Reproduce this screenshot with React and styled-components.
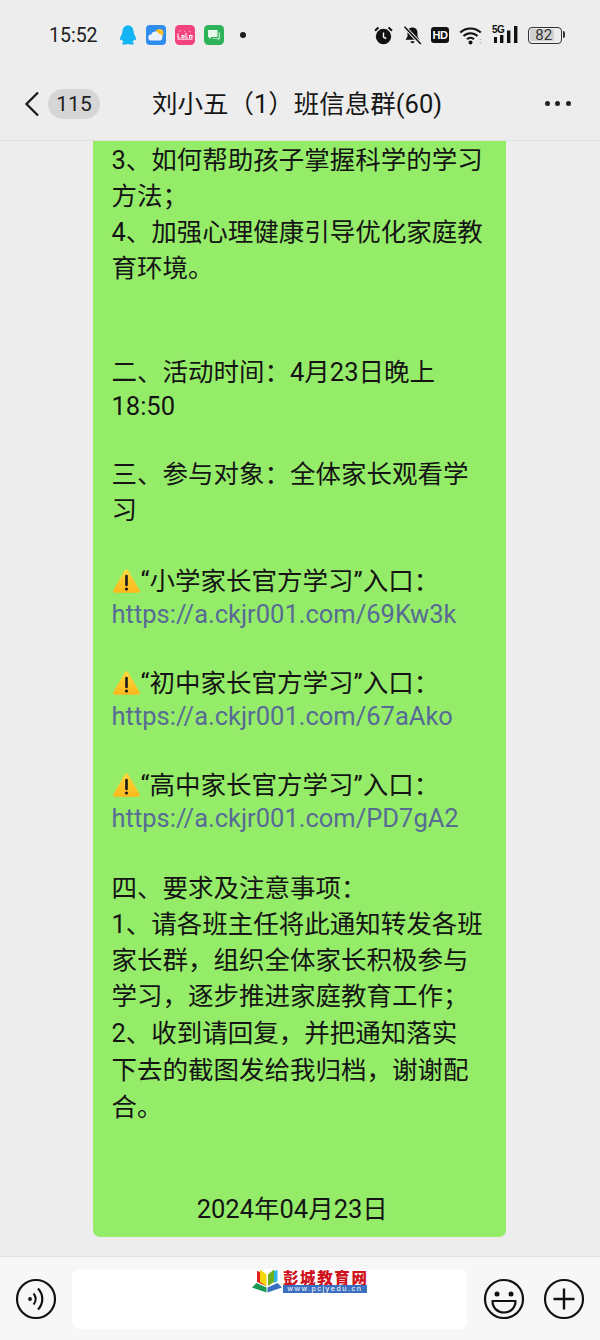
import React from "react";
import styled, { createGlobalStyle } from "styled-components";

const Global = createGlobalStyle`
  html, body { margin: 0; padding: 0; background: #ededed; }
  body { width: 600px; height: 1340px; overflow: hidden; font-family: Roboto, "Noto Sans CJK SC", sans-serif; color: #141414; }
`;
const Page = styled.div`
  width: 600px; height: 1340px; display: flex; flex-direction: column; overflow: hidden; background: #ededed;
`;
const StatusBar = styled.div`
  height: 70px; flex: none; display: flex; align-items: center; padding: 0 36px 0 49px; box-sizing: border-box;
`;
const Time = styled.span`
  font-size: 19.5px; letter-spacing: 0; color: #1c1c1c; width: 70px; flex: none;
`;
const IconGroup = styled.div`
  display: flex; align-items: center; gap: ${p => p.$gap}px; flex: none;
`;
const Spacer = styled.div`flex: 1;`;
const HdBadge = styled.span`
  width: 18px; height: 16px; border-radius: 3px; background: #111; color: #fff; font: 700 11px/16px "Liberation Sans", sans-serif; text-align: center; letter-spacing: -0.3px;
`;
const Signal = styled.div`
  position: relative; width: 26px; height: 18px; flex: none;
`;
const FiveG = styled.span`
  position: absolute; left: 0; top: -1px; font: 700 10px/9px "Liberation Sans", sans-serif; color: #111; letter-spacing: -0.6px;
`;
const Battery = styled.div`
  width: 29.4px; height: 12px; border: 1.3px solid #333; border-radius: 4px; position: relative; display: flex; align-items: stretch; padding: 1.5px; margin-right: 2px; box-sizing: content-box; flex: none;
  &::after { content: ""; position: absolute; right: -4px; top: 3px; width: 2.5px; height: 7px; background: #333; border-radius: 0 2px 2px 0; }
`;
const BatteryFill = styled.div`
  width: 82%; background: #d0d0d0; border-radius: 1.5px; font-size: 15px; line-height: 12px; color: #333; text-align: center; white-space: nowrap; padding-left: 3px; box-sizing: border-box;
`;
const Header = styled.div`
  height: 71px; flex: none; box-sizing: border-box; display: flex; align-items: center; padding: 0 29.5px 3px 24px; border-bottom: 1px solid #e2e2e2; color: #161616;
`;
const Pill = styled.div`
  width: 52px; height: 30px; border-radius: 15px; background: #d6d6d6; font-size: 21px; line-height: 30px; text-align: center; margin-left: 8px; flex: none; color: #222;
`;
const Title = styled.div`
  font-size: 25.5px; line-height: 36px; margin-left: 52px; white-space: nowrap; flex: 1;
`;
const Dots = styled.div`display: flex; gap: 5.5px;`;
const Dot = styled.span`width: 5px; height: 5px; border-radius: 50%; background: #222;`;
const Chat = styled.div`
  flex: 1; min-height: 0; padding-left: 93px; overflow: hidden;
`;
const Bubble = styled.div`
  width: 413px; height: 1096px; box-sizing: border-box; padding: 1px 0 0 18.5px; background: #95ec69; border-radius: 0 0 7px 7px; font-size: 25.5px; color: #141414;
`;
const Line = styled.div`
  height: ${p => p.$h || 36}px; line-height: ${p => p.$h || 36}px; white-space: nowrap; display: flex; align-items: center;
  ${p => p.$center ? "justify-content: center; padding-right: 33px;" : ""}
`;
const LatinLine = styled(Line)`
  box-sizing: border-box; height: 32px; line-height: 30px; padding-bottom: 1px;
`;
const Link = styled(LatinLine)`
  color: #576b95;
`;
const WarnLine = styled(Line)`
  height: 34px; line-height: 34px;
`;
const WarnIcon = styled.svg`
  width: 27px; height: 24px; flex: none; margin-right: 0.5px; margin-left: 1.5px;
`;
const Footer = styled.div`
  height: 84px; flex: none; box-sizing: border-box; background: #f7f7f7; border-top: 1px solid #dfdfdf; display: flex; align-items: center; padding: 0 15px; margin-top: 19px;
`;
const Input = styled.div`
  position: relative; width: 395px; height: 60px; background: #fff; border-radius: 8px; margin-left: 15px; margin-right: 16px; flex: none;
`;
const RoundIcon = styled.svg`
  width: 42px; height: 42px; flex: none; margin-left: ${p => p.$ml || 0}px;
`;
const Watermark = styled.div`
  position: absolute; left: 180px; top: -1px; display: flex; align-items: flex-start; gap: 1px;
`;
const WmText = styled.div`display: flex; flex-direction: column; width: 84px; padding-top: 2px;`;
const WmName = styled.div`
  font: 900 15.5px/15px "Noto Sans CJK SC", sans-serif; color: #d0121d; white-space: nowrap; letter-spacing: 1.6px; height: 15px;
`;
const WmUrl = styled.div`
  background: #3a6fc0; color: #fff; font: 400 7.5px/8px "Liberation Sans", sans-serif; letter-spacing: 1.5px; white-space: nowrap; height: 8px; text-align: center; overflow: hidden;
`;
const SmallDot = styled.span`width: 6px; height: 6px; border-radius: 50%; background: #1c1c1c; margin-left: 7px;`;

const Warn = () => (
  <WarnIcon viewBox="0 0 27 24">
    <defs>
      <linearGradient id="warnGrad" x1="0" y1="0" x2="0" y2="1">
        <stop offset="0" stopColor="#ffd83a" />
        <stop offset="1" stopColor="#fdb71c" />
      </linearGradient>
    </defs>
    <path d="M13.5 0.500c.9 0 1.600.5 2.100 1.400L26.500 21c.8 1.400-.1 2.800-1.700 2.800H2.200c-1.600 0-2.500-1.400-1.700-2.800L11.400 1.900c.5-.9 1.200-1.400 2.100-1.400z" fill="url(#warnGrad)" />
    <path d="M13.500 7v9" stroke="#1a1a1a" strokeWidth="2.600" strokeLinecap="round" />
    <circle cx="13.500" cy="20" r="1.600" fill="#1a1a1a" />
  </WarnIcon>
);

const Penguin = () => (
  <svg width="18" height="20" viewBox="0 0 18 20">
    <path d="M9 0.500c-3.600 0-5.500 2.700-5.500 6 0 1-.2 1.700-.8 2.800C1.700 11.200.6 13.300 1 14.800c.3.800 1.100.4 1.800-.5.300 1.200 1 2.200 1.900 3-1.100.4-1.800.9-1.800 1.400 0 .6 1.600.8 3.300.8 1.200 0 2.100-.2 2.800-.5.700.3 1.600.5 2.800.5 1.700 0 3.300-.2 3.300-.8 0-.5-.7-1-1.800-1.400.9-.8 1.600-1.800 1.900-3 .7.900 1.500 1.300 1.800.5.400-1.500-.7-3.600-1.700-5.500-.6-1.100-.8-1.800-.8-2.800 0-3.300-1.900-6-5.500-6z" fill="#12b4f4" />
  </svg>
);
const Weather = () => (
  <svg width="20" height="20" viewBox="0 0 20 20">
    <rect width="20" height="20" rx="4" fill="#2f8df0" />
    <circle cx="13.500" cy="8" r="4" fill="#fbc02d" />
    <path d="M5.500 15.500a3 3 0 0 1-.3-6 4.200 4.200 0 0 1 7.800-.6 3.400 3.400 0 0 1 1.200 6.600z" fill="#eaf3fd" />
  </svg>
);
const PinkApp = () => (
  <svg width="20" height="20" viewBox="0 0 20 20">
    <rect width="20" height="20" rx="4.500" fill="#f2427f" />
    <path d="M3 8.500v4.500h2.500M7 10.500h2v2.500H7zM11 8v5h2M14.500 10.500h2.500v2.500h-2.500z" stroke="#fff" strokeWidth="1.100" fill="none" />
    <path d="M4 6.500l1.500-1M9 6l1 1M14 6l1.500 1M2.500 14.500h15" stroke="#ffd5e3" strokeWidth=".8" fill="none" />
  </svg>
);
const GreenApp = () => (
  <svg width="20" height="20" viewBox="0 0 20 20">
    <rect width="20" height="20" rx="4.500" fill="#2fb35a" />
    <path d="M4 5h9.500v7H7.500L5 14v-2H4z" fill="#e6f7ea" />
    <path d="M14.700 7.500H16v6.500h-1v1.500L13 14H8.500v-.8h6.200z" fill="#bfe8cb" />
  </svg>
);
const Alarm = () => (
  <svg width="19" height="19" viewBox="0 0 19 19">
    <circle cx="9.500" cy="10.500" r="7.700" fill="#111" />
    <path d="M1 4.800 4.500 1.500M18 4.800 14.500 1.500" stroke="#111" strokeWidth="2" />
    <path d="M9.500 6.500v4.500l2.800 1.700" stroke="#fff" strokeWidth="1.400" fill="none" />
  </svg>
);
const BellMute = () => (
  <svg width="19" height="19" viewBox="0 0 19 19">
    <path d="M9.500 1.500c-3 0-5 2.200-5 5.200v3.800L2.500 13.800h14l-2-3.300V6.700c0-3-2-5.200-5-5.200z" fill="#111" />
    <path d="M7.500 15.300a2 2 0 0 0 4 0z" fill="#111" />
    <path d="M1.500 0.800 17.800 18" stroke="#ededed" strokeWidth="3.500" />
    <path d="M1.500 0.800 17.800 18" stroke="#111" strokeWidth="1.600" />
  </svg>
);
const Wifi = () => (
  <svg width="24" height="19" viewBox="0 0 24 19">
    <path d="M1.200 6.500a15 15 0 0 1 20.600 0" stroke="#111" strokeWidth="2" fill="none" />
    <path d="M4.500 10a10 10 0 0 1 14 0" stroke="#111" strokeWidth="2" fill="none" />
    <path d="M8 13.300a5 5 0 0 1 7 0" stroke="#111" strokeWidth="2" fill="none" />
    <circle cx="11.500" cy="16.500" r="2" fill="#111" />
    <path d="M20 14l1.500-1.500 1.500 1.500zM20 16l1.500 1.500 1.500-1.500z" fill="#bbb" />
  </svg>
);
const SignalBars = () => (
  <svg width="26" height="18" viewBox="0 0 26 18" style={{ position: "absolute", left: 0, top: 0 }}>
    <rect x="2" y="11" width="3" height="6" fill="#111" />
    <rect x="8" y="9" width="3.400" height="8" fill="#111" />
    <rect x="15" y="4.500" width="3.400" height="12.500" fill="#111" />
    <rect x="22" y="0" width="3.400" height="17" fill="#111" />
  </svg>
);
const Chevron = () => (
  <svg width="16" height="26" viewBox="0 0 16 26" style={{ flex: "none" }}>
    <path d="M14 1.500 2.500 13 14 24.500" stroke="#1c1c1c" strokeWidth="2.300" fill="none" />
  </svg>
);
const BookLogo = () => (
  <svg width="30" height="25" viewBox="0 0 30 25" style={{ flex: "none" }}>
    <path d="M5 3l5 1.500 4 3V18L5 14z" fill="#e02020" />
    <path d="M8 1.500l6.500 5V18L8 14z" fill="#f6d80a" />
    <path d="M16 6.500l6-5V14l-6 4z" fill="#6fb01a" />
    <path d="M22 3l3.500-1V13l-3.500 2z" fill="#2eb6ea" />
    <path d="M0 19.500 4.500 15l10 4.500v5z" fill="#1b9a54" />
    <path d="M30 19.500 25.500 15l-10 4.500v5z" fill="#3a6fc0" />
  </svg>
);

const Blank = ({ h = 34 }) => <Line $h={h} />;

export default function App() {
  return (
    <Page>
      <Global />
      <StatusBar>
        <Time>15:52</Time>
        <IconGroup $gap={9}>
          <Penguin />
          <Weather />
          <PinkApp />
          <GreenApp />
          <SmallDot />
        </IconGroup>
        <Spacer />
        <IconGroup $gap={9.5}>
          <Alarm />
          <BellMute />
          <HdBadge>HD</HdBadge>
          <Wifi />
          <Signal><FiveG>5G</FiveG><SignalBars /></Signal>
          <Battery><BatteryFill>82</BatteryFill></Battery>
        </IconGroup>
      </StatusBar>
      <Header>
        <Chevron />
        <Pill>115</Pill>
        <Title>刘小五（1）班信息群(60)</Title>
        <Dots><Dot /><Dot /><Dot /></Dots>
      </Header>
      <Chat>
        <Bubble>
          <Line>3、如何帮助孩子掌握科学的学习</Line>
          <Line>方法；</Line>
          <Line>4、加强心理健康引导优化家庭教</Line>
          <Line>育环境。</Line>
          <Blank />
          <Blank />
          <Line>二、活动时间：4月23日晚上</Line>
          <LatinLine>18:50</LatinLine>
          <Blank />
          <Line>三、参与对象：全体家长观看学</Line>
          <Line>习</Line>
          <Blank h={36} />
          <WarnLine><Warn />“小学家长官方学习”入口：</WarnLine>
          <Link>https://a.ckjr001.com/69Kw3k</Link>
          <Blank h={36} />
          <WarnLine><Warn />“初中家长官方学习”入口：</WarnLine>
          <Link>https://a.ckjr001.com/67aAko</Link>
          <Blank h={36} />
          <WarnLine><Warn />“高中家长官方学习”入口：</WarnLine>
          <Link>https://a.ckjr001.com/PD7gA2</Link>
          <Blank h={36} />
          <Line>四、要求及注意事项：</Line>
          <Line>1、请各班主任将此通知转发各班</Line>
          <Line>家长群，组织全体家长积极参与</Line>
          <Line>学习，逐步推进家庭教育工作；</Line>
          <Line $h={38}>2、收到请回复，并把通知落实</Line>
          <Line>下去的截图发给我归档，谢谢配</Line>
          <Line $h={38}>合。</Line>
          <Blank h={65} />
          <Line $center>2024年04月23日</Line>
        </Bubble>
      </Chat>
      <Footer>
        <RoundIcon viewBox="0 0 42 42">
          <circle cx="21" cy="21" r="19" stroke="#111" strokeWidth="2.200" fill="none" />
          <circle cx="15" cy="21" r="1.900" fill="#111" />
          <path d="M18.500 15.500a8 8 0 0 1 0 11" stroke="#111" strokeWidth="2" fill="none" />
          <path d="M23 10.500a15 15 0 0 1 0 21" stroke="#111" strokeWidth="2.200" fill="none" />
        </RoundIcon>
        <Input>
          <Watermark>
            <BookLogo />
            <WmText>
              <WmName>彭城教育网</WmName>
              <WmUrl>www.pcjyedu.cn</WmUrl>
            </WmText>
          </Watermark>
        </Input>
        <RoundIcon viewBox="0 0 42 42">
          <circle cx="21" cy="21" r="19" stroke="#111" strokeWidth="2.200" fill="none" />
          <circle cx="14" cy="16" r="2.500" fill="#111" />
          <circle cx="28" cy="16" r="2.500" fill="#111" />
          <path d="M9.500 23h23c0 7-5 11.500-11.500 11.500S9.500 30 9.500 23z" stroke="#111" strokeWidth="2.200" fill="none" strokeLinejoin="round" />
        </RoundIcon>
        <RoundIcon viewBox="0 0 42 42" $ml={18}>
          <circle cx="21" cy="21" r="19" stroke="#111" strokeWidth="2.200" fill="none" />
          <path d="M21 10.500v21M10.500 21h21" stroke="#111" strokeWidth="2.400" />
        </RoundIcon>
      </Footer>
    </Page>
  );
}
